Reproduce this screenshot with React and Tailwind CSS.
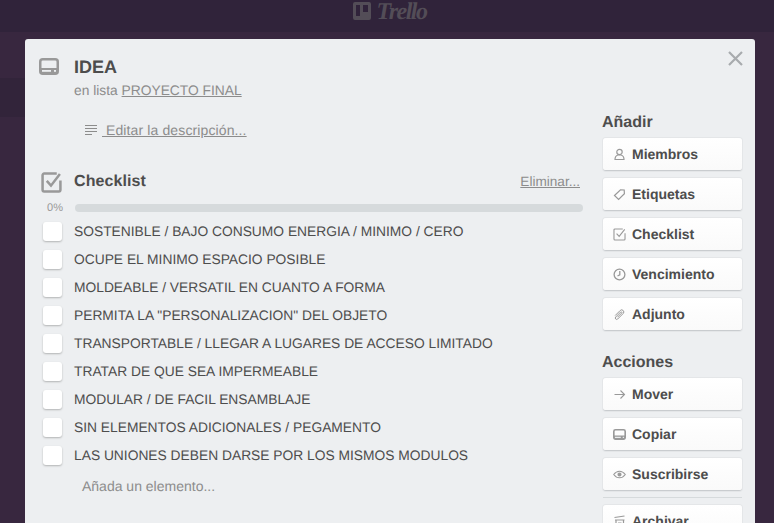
import React from 'react';

const items = [
  'SOSTENIBLE / BAJO CONSUMO ENERGIA / MINIMO / CERO',
  'OCUPE EL MINIMO ESPACIO POSIBLE',
  'MOLDEABLE / VERSATIL EN CUANTO A FORMA',
  'PERMITA LA "PERSONALIZACION" DEL OBJETO',
  'TRANSPORTABLE / LLEGAR A LUGARES DE ACCESO LIMITADO',
  'TRATAR DE QUE SEA IMPERMEABLE',
  'MODULAR / DE FACIL ENSAMBLAJE',
  'SIN ELEMENTOS ADICIONALES / PEGAMENTO',
  'LAS UNIONES DEBEN DARSE POR LOS MISMOS MODULOS',
];

function CardIcon({ className }) {
  return (
    <svg className={className} viewBox="0 0 20 17" fill="none">
      <rect x="1.250" y="1.250" width="17.500" height="14.500" rx="2.500" stroke="currentColor" strokeWidth="2.500" />
      <path d="M1 10h18v4a2 2 0 01-2 2H3a2 2 0 01-2-2z" fill="currentColor" />
      <rect x="3" y="12" width="9" height="1.800" fill="#edeff1" />
      <rect x="15" y="12" width="2" height="1.800" fill="#edeff1" />
    </svg>
  );
}

function CheckIcon({ className, sw = 2.400 }) {
  return (
    <svg className={className} viewBox="0 0 20 20" fill="none" stroke="currentColor">
      <path d="M15 1.500H3A1.500 1.500 0 001.500 3v14A1.500 1.500 0 003 18.500h14a1.500 1.500 0 001.500-1.500V8" strokeWidth={sw} />
      <path d="M5.500 8.500l4 4.500 8.500-11" strokeWidth={sw} />
    </svg>
  );
}

const g = 'w-[13px] h-[13px] text-[#999]';

const iconos = {
  miembros: (
    <svg className={g} viewBox="0 0 13 13" fill="none" stroke="currentColor" strokeWidth="1.200">
      <circle cx="6.500" cy="4" r="2.700" />
      <path d="M2 11.500c0-2.500 1-4 3-4.500h3c2 .5 3 2 3 4.500z" />
    </svg>
  ),
  etiquetas: (
    <svg className={g} viewBox="0 0 13 13" fill="none" stroke="currentColor" strokeWidth="1.200">
      <path d="M1.500 7.500L7.500 1.800l3.700.2.200 3.800-5.800 5.700z" />
    </svg>
  ),
  checklist: <CheckIcon className={g} sw={1.700} />,
  vencimiento: (
    <svg className={g} viewBox="0 0 13 13" fill="none" stroke="currentColor" strokeWidth="1.300">
      <circle cx="6.500" cy="6.500" r="5.400" />
      <path d="M6.800 3v3.800L4.500 8" />
    </svg>
  ),
  adjunto: (
    <svg className={g} viewBox="0 0 13 13" fill="none" stroke="currentColor" strokeWidth="1">
      <path d="M2.200 7.500l5-5a2 2 0 013 3l-5.500 5.500a1.300 1.300 0 01-2-2l5-5a.7.700 0 011 1L4.500 9.200" />
    </svg>
  ),
  mover: (
    <svg className={g} viewBox="0 0 13 13" fill="none" stroke="currentColor" strokeWidth="1.100">
      <path d="M1.500 6.500h10M7.500 2.500l4 4-4 4" />
    </svg>
  ),
  copiar: <CardIcon className={g} />,
  suscribirse: (
    <svg className={g} viewBox="0 0 13 13" fill="none" stroke="currentColor" strokeWidth="1.100">
      <path d="M.7 6.500C2.300 4.300 4.200 3.200 6.500 3.200s4.200 1.100 5.800 3.300c-1.600 2.200-3.500 3.300-5.800 3.300S2.300 8.700.7 6.500z" />
      <circle cx="6.500" cy="6.500" r="1.500" fill="currentColor" />
    </svg>
  ),
  archivar: (
    <svg className={g} viewBox="0 0 13 13" fill="none" stroke="currentColor" strokeWidth="1.200">
      <path d="M1.500 2.500l10-1.500M2 5h9.500M3 5v7h7.500V5M5 8h3.500" />
    </svg>
  ),
};

function Boton({ icono, children }) {
  return (
    <div className="flex items-center h-[33px] w-[139px] pl-[10px] bg-gradient-to-b from-white to-[#fafafa] rounded-[3px] border-b border-[#c9cccf] shadow-[0_0_0_1px_#e4e6e8] text-[14px] font-bold text-[#4d4d4d]">
      <span className="w-[19px] flex-none flex">{iconos[icono]}</span>
      {children}
    </div>
  );
}

export default function App() {
  return (
    <div className="relative h-[523px] w-[774px] overflow-hidden bg-[#38273f] font-['Liberation_Sans',sans-serif] [text-rendering:geometricPrecision]">
      {/* fond */}
      <div className="h-8 bg-[#30233a] flex items-start justify-center gap-[5px] pl-[6px] text-[#534d57]">
        <svg className="w-[18px] h-[18px] mt-[2px] flex-none" viewBox="0 0 18 18">
          <path fillRule="evenodd" fill="currentColor" d="M2 0h14a2 2 0 012 2v14a2 2 0 01-2 2H2a2 2 0 01-2-2V2a2 2 0 012-2zm1 3v11h4V3zm7 0v7h5V3z" />
        </svg>
        <span className="font-['Liberation_Serif',serif] italic font-bold text-[24px] leading-[24px] tracking-[-1.500px]">Trello</span>
      </div>
      <div className="mt-[46px] h-[39px] w-[25px] bg-[#32243a]" />

      {/* carte */}
      <div className="absolute left-[25px] top-[39px] w-[730px] h-[500px] rounded-[3px] bg-[#edeff1] text-[#4d4d4d]">
        <svg className="absolute right-[12px] top-[12px] w-[15px] h-[15px] text-[#a8abae]" viewBox="0 0 15 15" fill="none" stroke="currentColor" strokeWidth="2.200">
          <path d="M1 1l13 13M14 1L1 14" />
        </svg>

        <div className="flex pl-[14px] pt-[18px]">
          <CardIcon className="w-[20px] h-[17px] mt-[1px] text-[#999]" />
          <div className="ml-[15px]">
            <div className="text-[18px] leading-5 font-bold text-[#4d4d4d]">IDEA</div>
            <div className="mt-[5px] text-[13.800px] leading-[18px] text-[#8c8c8c]">
              en lista <span className="underline">PROYECTO FINAL</span>
            </div>
          </div>
        </div>

        <div className="flex">
          <div className="w-[577px] flex-none">
            <div className="flex items-center ml-[60px] mt-[21px] h-[18px] text-[14px] tracking-[0.12px] text-[#8c8c8c]">
              <svg className="w-[12px] h-[12px]" viewBox="0 0 12 12" stroke="currentColor" strokeWidth="1">
                <path d="M0 1.500h12M0 4.500h12M0 7.500h12M0 10.500h7" />
              </svg>
              <span className="ml-[5px] underline whitespace-pre"> Editar la descripción...</span>
            </div>

            <div className="flex items-center mt-[31px] pl-[16px]">
              <CheckIcon className="w-[21px] h-[21px] text-[#999]" />
              <div className="ml-[12px] text-[16px] tracking-[0.1px] font-bold">Checklist</div>
              <div className="ml-auto mr-[22px] text-[13.600px] text-[#8c8c8c] underline">Eliminar...</div>
            </div>

            <div className="flex items-center mt-[6px] h-4">
              <span className="w-[50px] text-right pr-[12px] text-[11px] text-[#999]">0%</span>
              <div className="w-[508px] h-2 rounded-full bg-[#d6dadc]" />
            </div>

            <div className="mt-[2px]">
              {items.map(it => (
                <div key={it} className="flex items-center h-[28px] pl-[18px]">
                  <span className="w-[19px] h-[19px] -translate-y-px rounded-[3px] bg-white shadow-[0_1px_2px_rgba(0,0,0,0.25)] flex-none" />
                  <span className="ml-[12px] text-[13.800px] text-[#4d4d4d] whitespace-nowrap">{it}</span>
                </div>
              ))}
            </div>

            <div className="ml-[57px] mt-[7px] text-[14px] leading-[18px] text-[#8c8c8c]">Añada un elemento...</div>
          </div>

          <div className="w-[139px] mt-[12px] ml-[1px]">
            <h3 className="text-[16px] leading-5 font-bold -ml-[1px] pt-[1px] mb-[5px]">Añadir</h3>
            <div className="flex flex-col gap-[7px]">
              <Boton icono="miembros">Miembros</Boton>
              <Boton icono="etiquetas">Etiquetas</Boton>
              <Boton icono="checklist">Checklist</Boton>
              <Boton icono="vencimiento">Vencimiento</Boton>
              <Boton icono="adjunto">Adjunto</Boton>
            </div>
            <h3 className="text-[16px] leading-5 font-bold -ml-[1px] mt-[21px] pt-[1px] mb-[5px]">Acciones</h3>
            <div className="flex flex-col gap-[7px]">
              <Boton icono="mover">Mover</Boton>
              <Boton icono="copiar">Copiar</Boton>
              <Boton icono="suscribirse">Suscribirse</Boton>
            </div>
            <div className="h-px bg-[#d6dadc] mt-[6px] mb-[7px]" />
            <Boton icono="archivar">Archivar</Boton>
          </div>
        </div>
      </div>
    </div>
  );
}
